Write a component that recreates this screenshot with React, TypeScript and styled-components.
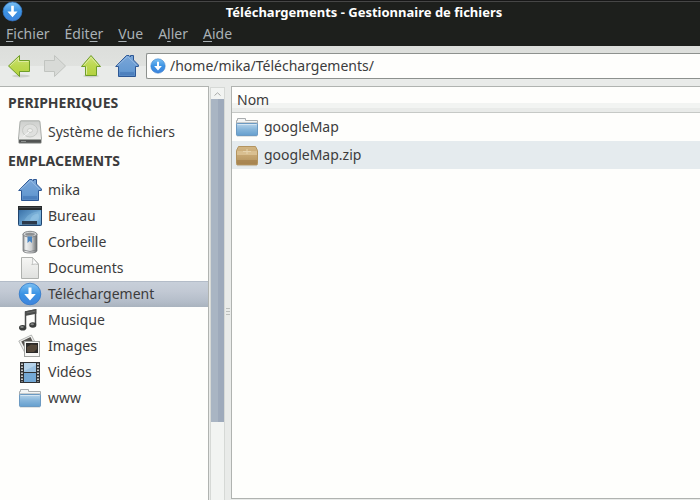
import React from "react";
import styled, { createGlobalStyle, css } from "styled-components";

const GlobalStyle = createGlobalStyle`
  * { box-sizing: border-box; }
  html, body, #root { height: 100%; }
  body {
    margin: 0;
    overflow: hidden;
    background: #e9ebe9;
    color: #3c3c3c;
    font-family: "Noto Sans", "Open Sans", sans-serif;
    font-size: 14px;
    line-height: 20px;
  }
  button, input { font: inherit; color: inherit; }
  button { border: 0; padding: 0; background: none; text-align: left; }
`;

/* ---------- layout ---------- */

const Window = styled.div`
  display: flex;
  flex-direction: column;
  height: 100vh;
`;

const TitleBar = styled.header`
  display: flex;
  align-items: center;
  gap: 5px;
  height: 22px;
  padding-left: 2px;
  background: #1d1f1c;
  border-top: 1px solid #171717;
  box-shadow: inset 0 1px 0 #464646;
  color: #ffffff;
`;

const Title = styled.h1`
  flex: 1;
  margin: 0;
  font-size: 13px;
  font-weight: 700;
  text-align: center;
`;

const MenuBar = styled.nav`
  display: flex;
  align-items: center;
  gap: 15px;
  height: 24px;
  padding-left: 6px;
  background: #1d1f1c;
  color: #a9b1b5;
`;

const Mnemonic = styled.span`
  text-decoration: underline;
  text-decoration-thickness: 1px;
  text-underline-offset: 2px;
`;

const Toolbar = styled.div`
  display: flex;
  align-items: center;
  gap: 12px;
  height: 40px;
  padding-left: 7px;
  background: linear-gradient(#dcdedb, #e0e2df 50%, #e9ebe9 51%);
`;

const ToolButton = styled.button`
  display: flex;
`;

const PathField = styled.label`
  display: flex;
  flex: 1;
  align-items: center;
  gap: 4px;
  height: 26px;
  margin-left: -5px;
  padding-left: 3px;
  background: #fefefc;
  border: 1px solid #8d918e;
  border-right: 0;
  border-radius: 2px 0 0 2px;
`;

const PathInput = styled.input`
  flex: 1;
  min-width: 0;
  padding: 0;
  border: 0;
  outline: 0;
  background: transparent;
`;

const Body = styled.div`
  display: grid;
  flex: 1;
  grid-template-columns: 209px 16px 6px minmax(0, 1fr);
  min-height: 0;
`;

const Sidebar = styled.aside`
  overflow: hidden;
  background: #fefefc;
  border-top: 1px solid #b0b3b0;
  border-right: 1px solid #b0b3b0;
`;

const GroupTitle = styled.h2`
  margin: 0;
  padding: 6px 8px;
  font-size: 14px;
  font-weight: 700;
`;

const Places = styled.ul`
  margin: 0;
  padding: 0;
  list-style: none;
`;

const Place = styled.button<{ $active?: boolean }>`
  display: flex;
  align-items: center;
  gap: 6px;
  width: 100%;
  height: 26px;
  padding-left: 18px;
  white-space: nowrap;
  ${({ $active }) =>
    $active &&
    css`
      background: linear-gradient(#c8d0da, #c2c9d4 40%, #b4bdc9 80%, #a9b3be);
      box-shadow: inset 0 1px 0 #b3bcc8;
    `}
`;

const ScrollBar = styled.div`
  display: grid;
  grid-template-rows: 11px 25fr 6fr;
  margin: 1px 0 0 1px;
  background: #f2f4f2;
  border: 1px solid #d6d9d6;
  border-bottom: 0;
`;

const ScrollUp = styled.button`
  display: flex;
  align-items: center;
  justify-content: center;
`;

const ScrollThumb = styled.div`
  background: linear-gradient(90deg, #a9b5c3 50%, #9eaabb 50%);
`;

const Splitter = styled.div`
  display: flex;
  flex-direction: column;
  align-items: center;
  justify-content: center;
  gap: 2px;
  padding-top: 36px;
`;

const Grip = styled.span`
  width: 4px;
  height: 1px;
  background: #bcbfbc;
`;

const Files = styled.main`
  margin-bottom: 1px;
  background: #fefefc;
  border: 1px solid #b0b3b0;
  border-right: 0;
`;

const FileTable = styled.table`
  width: 100%;
  border-collapse: separate;
  border-spacing: 0;
`;

const ColumnHead = styled.th`
  height: 26px;
  padding: 0 5px;
  background: linear-gradient(#fefefc 16px, #f2f4f2 16px 21px, #e9ebe9 21px);
  border-bottom: 1px solid #c6c9c6;
  font-weight: 400;
  text-align: left;
`;

const FileRow = styled.tr<{ $shaded?: boolean }>`
  background: ${({ $shaded }) => ($shaded ? "#e5ebee" : "#fefefc")};
`;

const FileCell = styled.td`
  height: 28px;
  padding: 0 3px;
`;

const FileName = styled.button`
  display: flex;
  align-items: center;
  gap: 5px;
  width: 100%;
`;

/* ---------- icons ---------- */

const Svg = styled.svg`
  display: block;
  flex: none;
`;

type IconProps = { size?: number };

const Icon = ({ size = 24, children }: IconProps & { children: React.ReactNode }) => (
  <Svg width={size} height={size} viewBox="0 0 24 24" aria-hidden="true">
    {children}
  </Svg>
);

const Gradients = () => (
  <Svg width="0" height="0" aria-hidden="true">
    <defs>
      <linearGradient id="green" x1="0" y1="0" x2="0" y2="1">
        <stop offset="0" stopColor="#d0e37c" />
        <stop offset=".5" stopColor="#bcd850" />
        <stop offset="1" stopColor="#b4d13f" />
      </linearGradient>
      <linearGradient id="ball" x1="0" y1="0" x2="0" y2="1">
        <stop offset="0" stopColor="#7cc0f2" />
        <stop offset=".5" stopColor="#3b93e4" />
        <stop offset="1" stopColor="#3f84dc" />
      </linearGradient>
      <linearGradient id="house" x1="0" y1="0" x2="0" y2="1">
        <stop offset="0" stopColor="#7aa6d8" />
        <stop offset=".7" stopColor="#669ad2" />
        <stop offset="1" stopColor="#5587c2" />
      </linearGradient>
      <linearGradient id="folder" x1="0" y1="0" x2="0" y2="1">
        <stop offset="0" stopColor="#b7d4ea" />
        <stop offset=".5" stopColor="#86b5da" />
        <stop offset="1" stopColor="#659fce" />
      </linearGradient>
      <linearGradient id="metal" x1="0" y1="0" x2="1" y2="0">
        <stop offset="0" stopColor="#8a8d8e" />
        <stop offset=".2" stopColor="#f0f1f1" />
        <stop offset=".6" stopColor="#cfd1d2" />
        <stop offset=".85" stopColor="#8f9293" />
        <stop offset="1" stopColor="#66696b" />
      </linearGradient>
      <linearGradient id="disk" x1="0" y1="0" x2="0" y2="1">
        <stop offset="0" stopColor="#cdcfcd" />
        <stop offset="1" stopColor="#ececea" />
      </linearGradient>
      <linearGradient id="paper" x1="0" y1="0" x2="0" y2="1">
        <stop offset="0" stopColor="#f6f6f4" />
        <stop offset="1" stopColor="#dfe0de" />
      </linearGradient>
      <linearGradient id="desk" x1="0" y1="0" x2="1" y2="1">
        <stop offset="0" stopColor="#2f669f" />
        <stop offset=".65" stopColor="#74add8" />
        <stop offset="1" stopColor="#4a87bf" />
      </linearGradient>
      <linearGradient id="box" x1="0" y1="0" x2="0" y2="1">
        <stop offset="0" stopColor="#d2b684" />
        <stop offset=".55" stopColor="#c3a36e" />
        <stop offset="1" stopColor="#b08e5a" />
      </linearGradient>
    </defs>
  </Svg>
);

const BackIcon = () => (
  <Icon>
    <ellipse cx="14" cy="22" rx="9" ry="1.5" fill="#cdd0cb" />
    <path d="M1.5 12 12.5 1.5V6.5H22.5V17.5H12.5V22.5Z" fill="url(#green)" stroke="#6f9e29" strokeLinejoin="round" />
    <path d="M3 12 11.5 3.8V7.5H21.5" fill="none" stroke="#deeb9f" />
  </Icon>
);

const ForwardIcon = () => (
  <Icon>
    <path d="M22.5 12 11.5 1.5V6.5H1.5V17.5H11.5V22.5Z" fill="#d8dad7" stroke="#c1c4c0" strokeLinejoin="round" />
  </Icon>
);

const UpIcon = () => (
  <Icon>
    <ellipse cx="12" cy="22" rx="8" ry="1.5" fill="#cdd0cb" />
    <path d="M12 1.5 21.5 12.5H17.5V21.5H6.5V12.5H2.5Z" fill="url(#green)" stroke="#6f9e29" strokeLinejoin="round" />
    <path d="M4.8 11.5 12 3.2 19.2 11.5M7.5 12.5V20.5" fill="none" stroke="#deeb9f" />
  </Icon>
);

const HomeIcon = () => (
  <Icon>
    <path
      d="M.7 12.5 11.5 1.5H14L15.5 3V1.5H18.5V6L23.4 11V12.5H20.5V22.5H3.5V12.5Z"
      fill="url(#house)"
      stroke="#2d5794"
      strokeLinejoin="round"
    />
    <path d="M2.4 11.5 12.7 2.6 21.8 11.5" fill="none" stroke="#9dbfe4" strokeWidth=".8" />
    <path d="M5 18H19V21H5Z" fill="#4377b5" opacity=".6" />
  </Icon>
);

const DownloadIcon = ({ size }: IconProps) => (
  <Icon size={size}>
    <circle cx="12" cy="12" r="10.8" fill="url(#ball)" stroke="#3379c8" strokeWidth=".8" />
    <path d="M10.5 5.5H13.5V12H17.8L12 18.6 6.2 12H10.5Z" fill="#fff" />
  </Icon>
);

const DiskIcon = () => (
  <Icon>
    <path d="M.5 17.5H23.5V22.5Q23.5 23.5 22.5 23.5H1.5Q.5 23.5.5 22.5Z" fill="#777a78" />
    <path
      d="M3 .8H21Q21.8.8 22 2L23.5 18.5Q23.5 19.5 22.5 19.5H1.5Q.5 19.5.5 18.5L2 2Q2.2.8 3 .8Z"
      fill="url(#disk)"
      stroke="#9b9e9b"
      strokeWidth=".8"
    />
    <ellipse cx="12" cy="10.5" rx="7.5" ry="6.5" fill="#dfe0de" stroke="#c3c5c2" strokeWidth=".9" />
    <ellipse cx="12" cy="10.5" rx="2.5" ry="2" fill="#f0f0ee" stroke="#c3c5c2" strokeWidth=".8" />
    <path d="M5.5 16.5 11 12" stroke="#fafafa" />
    <path d="M1.2 20H22.8V22.5H1.2Z" fill="#525453" />
    <path d="M3 21.5H8" stroke="#9b9e9c" strokeWidth=".8" />
  </Icon>
);

const DesktopIcon = () => (
  <Icon>
    <rect x=".5" y="2.5" width="23" height="19" rx=".8" fill="url(#desk)" stroke="#20456f" />
    <path d="M5 20Q8 8 23 7V20Z" fill="#8fc0e2" opacity=".4" />
    <path d="M12 17Q13 10 20 9.5 22 13 20 17Z" fill="#a4d0ea" opacity=".4" />
    <path d="M0 2H24V6H0Z" fill="#262a2c" />
    <path d="M1 3.5H23" stroke="#55595c" strokeWidth=".7" />
    <path d="M4 17H19V20.5H4Z" fill="#2c3a4b" />
  </Icon>
);

const TrashIcon = () => (
  <Icon>
    <path d="M5 4V20.5Q5 23 12 23T19 20.5V4Z" fill="url(#metal)" stroke="#6c6f71" strokeWidth=".7" />
    <ellipse cx="12" cy="4.2" rx="7" ry="2.9" fill="#d0d2d3" stroke="#74777a" strokeWidth=".8" />
    <ellipse cx="12" cy="4.2" rx="4.8" ry="1.5" fill="#8d9092" />
    <path d="M9.5 6.5H14V13L11.7 11 9.5 13Z" fill="#4985c2" />
    <path d="M5.5 20Q12 23 18.5 20" fill="none" stroke="#7c7f81" strokeWidth=".8" />
  </Icon>
);

const DocumentIcon = () => (
  <Icon>
    <path d="M3.5 1.5H14.5L20.5 8V22.5H3.5Z" fill="url(#paper)" stroke="#afb1ae" />
    <path d="M14.5 1.5Q15.2 7.5 13.8 8.5 17.5 7.5 20.5 8.5Z" fill="#fff" stroke="#afb1ae" strokeWidth=".8" />
  </Icon>
);

const MusicIcon = () => (
  <Icon>
    <path d="M7.5 18.5V4L17.5 2V16.5" fill="none" stroke="#4b4d4c" strokeWidth="1.5" />
    <path d="M7 3.2 18.4 1V5.8L7 8Z" fill="#4b4d4c" />
    <path d="M8.5 5 17.3 3.2" stroke="#777977" strokeWidth=".7" />
    <ellipse cx="4.7" cy="19.8" rx="3.7" ry="2.8" fill="#3b3d3c" />
    <ellipse cx="14.8" cy="17" rx="3.6" ry="2.8" fill="#3b3d3c" />
    <ellipse cx="4" cy="19" rx="1.8" ry="1" fill="#858785" />
    <ellipse cx="14.2" cy="16.2" rx="1.8" ry="1" fill="#858785" />
  </Icon>
);

const ImagesIcon = () => (
  <Icon>
    <path d="M.8 7 13.4 1 19 12 6.5 18Z" fill="#f2f2f0" stroke="#a5a7a4" strokeWidth=".8" />
    <path d="M3.2 7.4 12.5 3 16 10 7 14.5Z" fill="#565450" />
    <rect x="6.5" y="7.5" width="15" height="15" fill="#f7f7f5" stroke="#a0a3a0" />
    <rect x="8" y="9" width="12" height="10" fill="#2b2a28" />
    <path d="M9 18V13L13 10.5 19 11V15L16 18Z" fill="#54483a" />
  </Icon>
);

const VideoIcon = () => (
  <Icon>
    <rect x="2" y="2" width="20" height="21" fill="#303234" />
    <rect x="6" y="3" width="12" height="9" fill="#9bc2e2" />
    <rect x="6" y="13" width="12" height="9" fill="#73a8d5" />
    <path d="M6 3H18V5L6 11Z" fill="#c0daee" opacity=".7" />
    <path d="M4 3.5V22M20 3.5V22" stroke="#d7d9da" strokeWidth="1.8" strokeDasharray="1.5 1.5" />
  </Icon>
);

const FolderIcon = () => (
  <Icon>
    <path d="M1.5 19V5.5H2.5V3.5H10.5V5.5H22.5V19Z" fill="#f3f5f5" stroke="#a9adae" />
    <path d="M2 7.5H22" stroke="#c9cdce" />
    <rect x="1.5" y="8.5" width="21" height="12" rx=".7" fill="url(#folder)" stroke="#6c9ac2" />
    <path d="M2.5 9.5H21.5" stroke="#d4e5f2" />
    <path d="M2 21.5H22" stroke="#cdd1d2" strokeWidth=".6" />
  </Icon>
);

const PackageIcon = () => (
  <Icon>
    <path
      d="M3.5 3.5H20.5L22.5 7.5V20.5Q22.5 22 21.5 22H2.5Q1.5 22 1.5 20.5V7.5Z"
      fill="url(#box)"
      stroke="#b3945f"
      strokeLinejoin="round"
    />
    <path d="M2 8H22V12H2Z" fill="#d9bf90" />
    <path d="M2 17H22V21.3H2Z" fill="#a07d49" opacity=".6" />
    <path d="M12 6V11M8 8.5H16" stroke="#e6d3ad" />
    <path d="M2 22.7H22" stroke="#c7c1b5" strokeWidth=".6" />
  </Icon>
);

/* ---------- data ---------- */

const menus = [
  ["", "F", "ichier"],
  ["Édit", "e", "r"],
  ["", "V", "ue"],
  ["A", "l", "ler"],
  ["", "A", "ide"],
];

const tools = [
  { label: "Précédent", icon: <BackIcon /> },
  { label: "Suivant", icon: <ForwardIcon />, disabled: true },
  { label: "Dossier parent", icon: <UpIcon /> },
  { label: "Dossier personnel", icon: <HomeIcon /> },
];

const groups = [
  {
    title: "PERIPHERIQUES",
    places: [{ label: "Système de fichiers", icon: <DiskIcon /> }],
  },
  {
    title: "EMPLACEMENTS",
    places: [
      { label: "mika", icon: <HomeIcon /> },
      { label: "Bureau", icon: <DesktopIcon /> },
      { label: "Corbeille", icon: <TrashIcon /> },
      { label: "Documents", icon: <DocumentIcon /> },
      { label: "Téléchargement", icon: <DownloadIcon />, active: true },
      { label: "Musique", icon: <MusicIcon /> },
      { label: "Images", icon: <ImagesIcon /> },
      { label: "Vidéos", icon: <VideoIcon /> },
      { label: "www", icon: <FolderIcon /> },
    ],
  },
];

const files = [
  { name: "googleMap", icon: <FolderIcon /> },
  { name: "googleMap.zip", icon: <PackageIcon /> },
];

export default function App() {
  return (
    <Window>
      <GlobalStyle />
      <TitleBar>
        <DownloadIcon size={21} />
        <Title>Téléchargements - Gestionnaire de fichiers</Title>
      </TitleBar>
      <MenuBar>
        {menus.map(([before, key, after]) => (
          <button type="button" key={before + key + after}>
            {before}
            <Mnemonic>{key}</Mnemonic>
            {after}
          </button>
        ))}
      </MenuBar>
      <Toolbar>
        {tools.map((tool) => (
          <ToolButton type="button" key={tool.label} aria-label={tool.label} disabled={tool.disabled}>
            {tool.icon}
          </ToolButton>
        ))}
        <PathField>
          <DownloadIcon size={16} />
          <PathInput aria-label="Emplacement" defaultValue="/home/mika/Téléchargements/" />
        </PathField>
      </Toolbar>
      <Body>
        <Sidebar>
          {groups.map((group) => (
            <section key={group.title}>
              <GroupTitle>{group.title}</GroupTitle>
              <Places>
                {group.places.map((place) => (
                  <li key={place.label}>
                    <Place type="button" $active={"active" in place}>
                      {place.icon}
                      {place.label}
                    </Place>
                  </li>
                ))}
              </Places>
            </section>
          ))}
        </Sidebar>
        <ScrollBar>
          <ScrollUp type="button" aria-label="Défiler vers le haut">
            <Svg width="7" height="4" viewBox="0 0 7 4" aria-hidden="true">
              <path d="M.5 3.5 3.5 .8 6.5 3.5" fill="none" stroke="#a7aaa7" />
            </Svg>
          </ScrollUp>
          <ScrollThumb />
        </ScrollBar>
        <Splitter>
          <Grip />
          <Grip />
          <Grip />
        </Splitter>
        <Files>
          <FileTable>
            <thead>
              <tr>
                <ColumnHead scope="col">Nom</ColumnHead>
              </tr>
            </thead>
            <tbody>
              {files.map((file, index) => (
                <FileRow key={file.name} $shaded={index % 2 === 1}>
                  <FileCell>
                    <FileName type="button">
                      {file.icon}
                      {file.name}
                    </FileName>
                  </FileCell>
                </FileRow>
              ))}
            </tbody>
          </FileTable>
        </Files>
      </Body>
      <Gradients />
    </Window>
  );
}
